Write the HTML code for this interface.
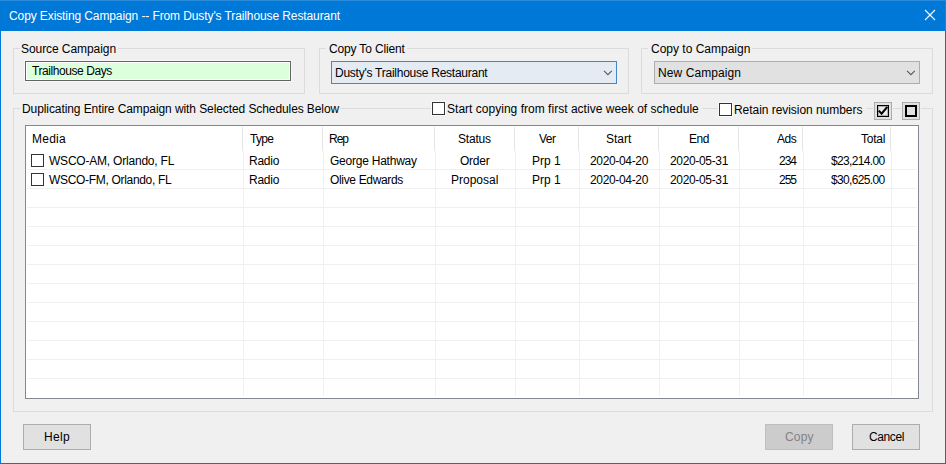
<!DOCTYPE html>
<html><head><meta charset="utf-8">
<style>
*{box-sizing:border-box;margin:0;padding:0}
html,body{width:946px;height:464px;overflow:hidden;background:#f0f0f0}
body{position:relative;font-family:"Liberation Sans",sans-serif;font-size:12px;color:#000}
div{position:absolute;white-space:nowrap}
.gb{border:1px solid #dcdcdc}
.t{line-height:15px;height:15px}
.gl{}
.lb{background:#f0f0f0;height:3px;top:47px}
.chk2{box-shadow:0 0 0 1px #fafafa}
.chk{width:13px;height:13px;border:1px solid #333;background:#fff}
.btn{border:1px solid #adadad;background:#e1e1e1}
.hs{width:1px;top:127px;height:24px;background:#e5e5e5}
.vl{width:1px;top:151px;height:245px;background:#f0f0f0}
.hl{left:27px;width:890px;height:1px;background:#f0f0f0}
</style></head><body>
<div style="left:0;top:0;width:946px;height:31px;background:#0078d7"></div>
<div style="left:0;top:0;width:946px;height:1px;background:#2b8bdb"></div>
<div style="left:945px;top:0;width:1px;height:31px;background:#1a82d8"></div>
<svg style="position:absolute;left:924px;top:9px" width="12" height="12" viewBox="0 0 12 12"><path d="M1 1L11 11M11 1L1 11" stroke="#fff" stroke-width="1.1" fill="none"/></svg>
<div style="left:0;top:31px;width:1px;height:433px;background:#0078d7"></div>
<div style="left:945px;top:31px;width:1px;height:433px;background:#0078d7"></div>
<div style="left:0;top:463px;width:946px;height:1px;background:#0078d7"></div>

<div class="gb" style="left:13px;top:48px;width:292px;height:46px"></div>
<div style="left:25px;top:61px;width:266px;height:20px;border:1px solid #646464;background:#dcffdc;box-shadow:inset 0 0 0 1px #fff,0 0 0 1px #f8f8f8"></div>

<div class="gb" style="left:319px;top:48px;width:310px;height:46px"></div>
<div style="left:331px;top:61px;width:286px;height:23px;border:1px solid #4287cc;background:#e4ebf3"></div>
<svg style="position:absolute;left:603px;top:69px" width="11" height="8" viewBox="0 0 11 8"><path d="M1 1.8L4.9 5.7L8.8 1.8" stroke="#5a5a5a" stroke-width="1.15" fill="none"/></svg>

<div class="gb" style="left:641px;top:48px;width:292px;height:46px"></div>
<div style="left:654px;top:61px;width:266px;height:23px;border:1px solid #adadad;background:#e1e1e1"></div>
<svg style="position:absolute;left:906px;top:69px" width="11" height="8" viewBox="0 0 11 8"><path d="M1 1.8L4.9 5.7L8.8 1.8" stroke="#5a5a5a" stroke-width="1.15" fill="none"/></svg>

<div class="gb" style="left:13px;top:108px;width:920px;height:304px"></div>
<div class="lb" style="left:20px;width:98px"></div>
<div class="lb" style="left:326px;width:81px"></div>
<div class="lb" style="left:648px;width:104px"></div>
<div class="lb" style="left:20px;width:320px;top:107px"></div>

<div class="lb" style="left:431px;width:271px;top:107px"></div>
<div class="chk chk2" style="left:432px;top:102px"></div>
<div class="lb" style="left:719px;width:148px;top:107px"></div>
<div class="chk chk2" style="left:719px;top:103px"></div>

<div class="lb" style="left:873px;width:20px;top:107px"></div><div class="lb" style="left:901px;width:20px;top:107px"></div>
<div style="left:874px;top:102px;width:18px;height:18px;border:1px solid #adadad;background:#e1e1e1"></div>
<svg style="position:absolute;left:877px;top:105px" width="12" height="12" viewBox="0 0 12 12"><rect x="0.5" y="0.5" width="11" height="11" fill="#e9e9e9" stroke="#000" stroke-width="1"/><rect x="1.5" y="1.5" width="9" height="9" fill="none" stroke="#000" stroke-opacity="0.25" stroke-width="1"/><path d="M1.8 5.6L4.6 8.6L10.3 1.8" stroke="#000" stroke-width="2.1" fill="none"/></svg>
<div style="left:902px;top:102px;width:18px;height:18px;border:1px solid #adadad;background:#e1e1e1"></div>
<div style="left:905px;top:105px;width:12px;height:12px;border:2px solid #000;background:#e1e1e1"></div>

<div style="left:25px;top:125px;width:894px;height:274px;background:#fff;border:1px solid #828790"></div>

<div class="hs" style="left:242px"></div>
<div class="vl" style="left:243px"></div>
<div class="hs" style="left:322px"></div>
<div class="vl" style="left:323px"></div>
<div class="hs" style="left:434px"></div>
<div class="vl" style="left:435px"></div>
<div class="hs" style="left:514px"></div>
<div class="vl" style="left:515px"></div>
<div class="hs" style="left:578px"></div>
<div class="vl" style="left:579px"></div>
<div class="hs" style="left:658px"></div>
<div class="vl" style="left:659px"></div>
<div class="hs" style="left:738px"></div>
<div class="vl" style="left:739px"></div>
<div class="hs" style="left:802px"></div>
<div class="vl" style="left:803px"></div>
<div class="hs" style="left:890px"></div>
<div class="vl" style="left:891px"></div>
<div class="hl" style="top:169px"></div>
<div class="hl" style="top:188px"></div>
<div class="hl" style="top:207px"></div>
<div class="hl" style="top:226px"></div>
<div class="hl" style="top:245px"></div>
<div class="hl" style="top:264px"></div>
<div class="hl" style="top:283px"></div>
<div class="hl" style="top:302px"></div>
<div class="hl" style="top:321px"></div>
<div class="hl" style="top:340px"></div>
<div class="hl" style="top:359px"></div>
<div class="hl" style="top:378px"></div>
<div class="chk" style="left:31px;top:154px"></div>
<div class="chk" style="left:31px;top:173px"></div>

<div class="btn" style="left:23px;top:424px;width:68px;height:26px"></div>
<div class="btn" style="left:765px;top:424px;width:68px;height:26px;background:#cccccc;border-color:#bfbfbf"></div>
<div class="btn" style="left:852px;top:424px;width:68px;height:26px"></div>

<div id="title" class="t" style="left:9px;top:9px;letter-spacing:-0.102px;color:#fff">Copy Existing Campaign -- From Dusty's Trailhouse Restaurant</div>
<div id="g1" class="t gl" style="left:21px;top:42px;letter-spacing:-0.071px">Source Campaign</div>
<div id="g2" class="t gl" style="left:329px;top:42px;letter-spacing:-0.154px">Copy To Client</div>
<div id="g3" class="t gl" style="left:651px;top:42px;letter-spacing:0.000px">Copy to Campaign</div>
<div id="tb" class="t" style="left:32px;top:64px;letter-spacing:-0.429px">Trailhouse Days</div>
<div id="c1" class="t" style="left:335px;top:66px;letter-spacing:-0.250px">Dusty's Trailhouse Restaurant</div>
<div id="c2" class="t" style="left:658px;top:66px;letter-spacing:0.091px">New Campaign</div>
<div id="g4" class="t gl" style="left:22px;top:102px;letter-spacing:-0.089px">Duplicating Entire Campaign with Selected Schedules Below</div>
<div id="ck1" class="t" style="left:447px;top:102px;letter-spacing:0.021px">Start copying from first active week of schedule</div>
<div id="ck2" class="t" style="left:734px;top:103px;letter-spacing:-0.045px">Retain revision numbers</div>
<div id="h1" class="t" style="left:32px;top:132px;letter-spacing:0.250px">Media</div>
<div id="h2" class="t" style="left:250px;top:132px;letter-spacing:-0.667px">Type</div>
<div id="h3" class="t" style="left:329px;top:132px;letter-spacing:-1.000px">Rep</div>
<div id="h4" class="t" style="left:458px;top:132px;letter-spacing:-0.200px">Status</div>
<div id="h5" class="t" style="left:539px;top:132px;letter-spacing:-0.500px">Ver</div>
<div id="h6" class="t" style="left:606px;top:132px;letter-spacing:0.000px">Start</div>
<div id="h7" class="t" style="left:689px;top:132px;letter-spacing:-0.500px">End</div>
<div id="h8" class="t" style="left:777px;top:132px;letter-spacing:-0.500px">Ads</div>
<div id="h9" class="t" style="left:861px;top:132px;letter-spacing:-0.250px">Total</div>
<div id="r1a" class="t" style="left:49px;top:154px;letter-spacing:-0.211px">WSCO-AM, Orlando, FL</div>
<div id="r1b" class="t" style="left:249px;top:154px;letter-spacing:-0.250px">Radio</div>
<div id="r1c" class="t" style="left:330px;top:154px;letter-spacing:-0.231px">George Hathway</div>
<div id="r1d" class="t" style="left:460px;top:154px;letter-spacing:-0.250px">Order</div>
<div id="r1e" class="t" style="left:532px;top:154px;letter-spacing:0.000px">Prp 1</div>
<div id="r1f" class="t" style="left:590px;top:154px;letter-spacing:-0.333px">2020-04-20</div>
<div id="r1g" class="t" style="left:670px;top:154px;letter-spacing:-0.333px">2020-05-31</div>
<div id="r1h" class="t" style="left:779px;top:154px;letter-spacing:-1.000px">234</div>
<div id="r1i" class="t" style="left:831px;top:154px;letter-spacing:-0.667px">$23,214.00</div>
<div id="r2a" class="t" style="left:49px;top:173px;letter-spacing:-0.316px">WSCO-FM, Orlando, FL</div>
<div id="r2b" class="t" style="left:249px;top:173px;letter-spacing:-0.250px">Radio</div>
<div id="r2c" class="t" style="left:330px;top:173px;letter-spacing:-0.333px">Olive Edwards</div>
<div id="r2d" class="t" style="left:451px;top:173px;letter-spacing:0.000px">Proposal</div>
<div id="r2e" class="t" style="left:532px;top:173px;letter-spacing:0.000px">Prp 1</div>
<div id="r2f" class="t" style="left:590px;top:173px;letter-spacing:-0.333px">2020-04-20</div>
<div id="r2g" class="t" style="left:670px;top:173px;letter-spacing:-0.333px">2020-05-31</div>
<div id="r2h" class="t" style="left:779px;top:173px;letter-spacing:-1.000px">255</div>
<div id="r2i" class="t" style="left:831px;top:173px;letter-spacing:-0.667px">$30,625.00</div>
<div id="b1" class="t" style="left:44px;top:430px;letter-spacing:0.333px">Help</div>
<div id="b2" class="t" style="left:785px;top:430px;letter-spacing:0.200px;color:#838383">Copy</div>
<div id="b3" class="t" style="left:869px;top:430px;letter-spacing:-0.400px">Cancel</div>
</body></html>
